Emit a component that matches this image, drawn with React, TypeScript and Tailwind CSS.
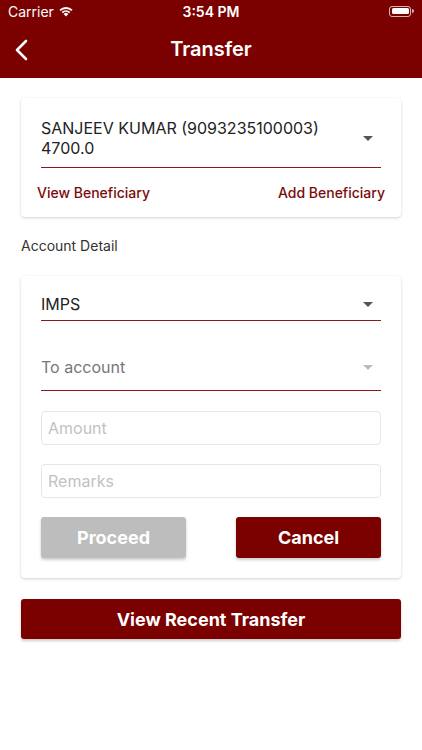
import React from 'react';

const MAROON = 'bg-[#7b0000]';

function Caret({ light }: { light?: boolean }) {
    return (
        <svg width="10" height="5" viewBox="0 0 10 5" className={light ? 'text-[#bdbdbd]' : 'text-[#555]'}>
            <path d="M0 0h10L5 5z" fill="currentColor" />
        </svg>
    );
}

function StatusBar() {
    return (
        <div className="h-[22px] flex items-center justify-between px-2 text-white text-[14px]">
            <div className="flex items-center gap-1 w-[100px]">
                <span>Carrier</span>
                <svg width="16" height="12" viewBox="0 0 16 12" fill="white">
                    <path d="M8 11.5 5.6 9a3.4 3.4 0 0 1 4.8 0z" />
                    <path d="M3.6 7a6.3 6.3 0 0 1 8.8 0l-1.3 1.3a4.5 4.5 0 0 0-6.2 0z" />
                    <path d="M1.4 4.8a9.4 9.4 0 0 1 13.2 0l-1.3 1.3a7.6 7.6 0 0 0-10.6 0z" />
                </svg>
            </div>
            <span className="font-semibold text-[14px]">3:54 PM</span>
            <div className="w-[100px] flex justify-end">
                <div className="flex items-center">
                    <div className="w-[22px] h-[11px] rounded-[3px] border border-white/70 p-[1.5px]">
                        <div className="w-full h-full bg-white rounded-[1.5px]" />
                    </div>
                    <div className="w-[1.5px] h-[4px] bg-white/70 rounded-r ml-[1px]" />
                </div>
            </div>
        </div>
    );
}

function Header() {
    return (
        <div className={`${MAROON} h-[78px] flex flex-col`}>
            <StatusBar />
            <div className="flex-1 relative flex items-center justify-center">
                <button className="absolute left-[14px] top-[17px]">
                    <svg width="16" height="22" viewBox="0 0 16 22" fill="none" stroke="white" strokeWidth="2.6" strokeLinecap="round" strokeLinejoin="round">
                        <path d="M12 2 3 11l9 9" />
                    </svg>
                </button>
                <span className="text-white text-[20px] font-semibold mt-[-3px]">Transfer</span>
            </div>
        </div>
    );
}

export default function App() {
    return (
        <div className="w-[422px] h-[750px] bg-white font-['Inter',sans-serif] overflow-hidden">
            <Header />

            <div className="px-[21px] pt-[20px]">
                {/* Beneficiary card */}
                <div className="rounded-[4px] bg-white shadow-[0_1px_3px_rgba(0,0,0,0.18)] px-[16px] pt-[20px] pb-[14px]">
                    <div className="mx-[4px] flex items-center justify-between border-b border-[#8a1a1a] pb-[9px]">
                        <div className="text-[16px] leading-[20px] text-[#222]">
                            <div>SANJEEV KUMAR (9093235100003)</div>
                            <div>4700.0</div>
                        </div>
                        <div className="mr-[8px]"><Caret /></div>
                    </div>
                    <div className="flex justify-between mt-[15px] text-[14px] leading-[20px] font-medium text-[#7b0a0a]">
                        <span>View Beneficiary</span>
                        <span>Add Beneficiary</span>
                    </div>
                </div>

                <div className="mt-[19px] text-[14px] leading-[20px] text-[#333]">Account Detail</div>

                {/* Account card */}
                <div className="mt-[20px] rounded-[4px] bg-white shadow-[0_1px_3px_rgba(0,0,0,0.18)] px-[20px] pt-[17px] pb-[20px]">
                    <div className="flex items-center justify-between border-b border-[#8a1a1a] pb-[5px]">
                        <span className="text-[16px] leading-[22px] text-[#222]">IMPS</span>
                        <div className="mr-[8px]"><Caret /></div>
                    </div>
                    <div className="mt-[35px] flex items-center justify-between border-b border-[#8a1a1a] pb-[12px]">
                        <span className="text-[16px] leading-[22px] text-[#777]">To account</span>
                        <div className="mr-[8px]"><Caret light /></div>
                    </div>
                    <input
                        placeholder="Amount"
                        className="mt-[20px] block w-full h-[34px] rounded-[4px] border border-[#e6e6e6] px-[6px] text-[16px] placeholder:text-[#c2c2c2] outline-none"
                    />
                    <input
                        placeholder="Remarks"
                        className="mt-[19px] block w-full h-[34px] rounded-[4px] border border-[#e6e6e6] px-[6px] text-[16px] placeholder:text-[#c2c2c2] outline-none"
                    />
                    <div className="mt-[19px] flex justify-between">
                        <button className="w-[145px] h-[41px] rounded-[3px] bg-[#bdbdbd] text-white text-[18px] font-bold shadow-[0_2px_3px_rgba(0,0,0,0.2)]">
                            Proceed
                        </button>
                        <button className={`w-[145px] h-[41px] rounded-[3px] ${MAROON} text-white text-[18px] font-bold shadow-[0_2px_3px_rgba(0,0,0,0.2)]`}>
                            Cancel
                        </button>
                    </div>
                </div>

                <button className={`mt-[21px] block w-full h-[40px] rounded-[3px] ${MAROON} text-white text-[18px] font-bold shadow-[0_2px_3px_rgba(0,0,0,0.2)]`}>
                    View Recent Transfer
                </button>
            </div>
        </div>
    );
}
